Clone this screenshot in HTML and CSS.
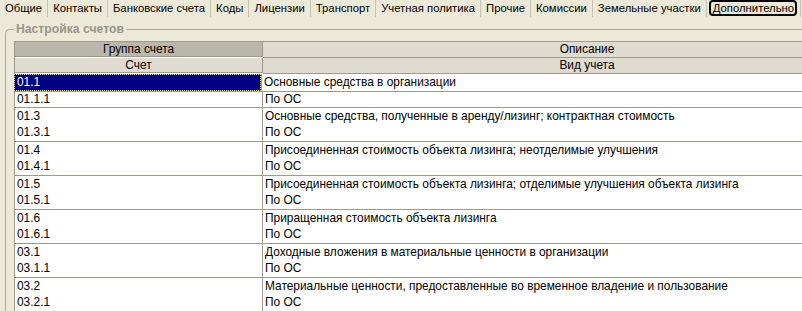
FILE: index.html
```html
<!DOCTYPE html>
<html lang="ru">
<head>
<meta charset="utf-8">
<title>Настройка счетов</title>
<link rel="stylesheet" href="styles.css">
</head>
<body>
<div class="tabs">
  <div class="tab">Общие</div>
  <div class="tab">Контакты</div>
  <div class="tab">Банковские счета</div>
  <div class="tab">Коды</div>
  <div class="tab">Лицензии</div>
  <div class="tab">Транспорт</div>
  <div class="tab">Учетная политика</div>
  <div class="tab">Прочие</div>
  <div class="tab">Комиссии</div>
  <div class="tab">Земельные участки</div>
  <div class="tab active"><span class="focus">Дополнительно</span></div>
  <div class="tab tab-rest"></div>
</div>
<fieldset class="group">
  <legend class="group-title">Настройка счетов</legend>
  <div class="grid">
    <div class="head">
      <div class="hrow">
        <div class="c1 hcell dark">Группа счета</div>
        <div class="c2 hcell">Описание</div>
      </div>
      <div class="hrow">
        <div class="c1 hcell">Счет</div>
        <div class="c2 hcell">Вид учета</div>
      </div>
    </div>
    <div class="rec first">
      <div class="line top"><div class="c1 cell sel"><span>01.1</span></div><div class="c2 cell">Основные средства в организации</div></div>
      <div class="line bottom"><div class="c1 cell">01.1.1</div><div class="c2 cell">По ОС</div></div>
    </div>
    <div class="rec">
      <div class="line top"><div class="c1 cell">01.3</div><div class="c2 cell">Основные средства, полученные в аренду/лизинг; контрактная стоимость</div></div>
      <div class="line bottom"><div class="c1 cell">01.3.1</div><div class="c2 cell">По ОС</div></div>
    </div>
    <div class="rec">
      <div class="line top"><div class="c1 cell">01.4</div><div class="c2 cell">Присоединенная стоимость объекта лизинга; неотделимые улучшения</div></div>
      <div class="line bottom"><div class="c1 cell">01.4.1</div><div class="c2 cell">По ОС</div></div>
    </div>
    <div class="rec">
      <div class="line top"><div class="c1 cell">01.5</div><div class="c2 cell">Присоединенная стоимость объекта лизинга; отделимые улучшения объекта лизинга</div></div>
      <div class="line bottom"><div class="c1 cell">01.5.1</div><div class="c2 cell">По ОС</div></div>
    </div>
    <div class="rec">
      <div class="line top"><div class="c1 cell">01.6</div><div class="c2 cell">Приращенная стоимость объекта лизинга</div></div>
      <div class="line bottom"><div class="c1 cell">01.6.1</div><div class="c2 cell">По ОС</div></div>
    </div>
    <div class="rec">
      <div class="line top"><div class="c1 cell">03.1</div><div class="c2 cell">Доходные вложения в материальные ценности в организации</div></div>
      <div class="line bottom"><div class="c1 cell">03.1.1</div><div class="c2 cell">По ОС</div></div>
    </div>
    <div class="rec">
      <div class="line top"><div class="c1 cell">03.2</div><div class="c2 cell">Материальные ценности, предоставленные во временное владение и пользование</div></div>
      <div class="line bottom"><div class="c1 cell">03.2.1</div><div class="c2 cell">По ОС</div></div>
    </div>
  </div>
</fieldset>
</body>
</html>
```
FILE: styles.css
```css
html, body {
  margin: 0;
  padding: 0;
  background: #ece9d8;
  overflow: hidden;
  width: 802px;
  height: 311px;
}
body {
  font-family: "Liberation Sans", Arial, sans-serif;
  font-size: 11.9px;
  color: #000;
}
.tabs {
  display: flex;
  height: 18px;
  white-space: nowrap;
  font-size: 11.3px;
}
.tab {
  box-sizing: border-box;
  height: 17px;
  padding: 2px 5px 0 5px;
  border-right: 1px solid #c7c3b4;
  line-height: 13px;
}
.tab.active {
  padding: 0 3px 0 2px;
}
.focus {
  display: block;
  height: 16px;
  box-sizing: border-box;
  border: 2px solid #000;
  border-radius: 4px;
  padding: 0 1px 0 2px;
  line-height: 12px;
}
.tab-rest {
  flex: 1;
  border-right: none;
}
.group {
  margin: 5px 0 0 5px;
  padding: 5px 0 0 8px;
  border: none;
  border-top: 1px solid #aca899;
  border-left: 1px solid #aca899;
  border-top-left-radius: 5px;
  min-width: 0;
  width: 940px;
  box-sizing: border-box;
}
.group-title {
  padding: 0 2px;
  font-weight: bold;
  font-size: 12.2px;
  color: #98958a;
  line-height: 13px;
}
.grid {
  width: 896px;
  border-top: 1px solid #9d998b;
  border-left: 1px solid #9d998b;
  background: #fff;
}
.hrow, .line {
  display: flex;
}
.c1 {
  box-sizing: border-box;
  width: 248px;
  flex: none;
  border-right: 1px solid #9d998b;
}
.c2 {
  flex: 1;
}
.hcell {
  height: 15px;
  line-height: 14px;
  text-align: center;
  background: #dfdbd1;
  border-bottom: 1px solid #9d998b;
}
.hcell.dark {
  background: #bcb7ac;
}
.rec {
  border-bottom: 1px solid #9d998b;
}
.cell {
  padding-left: 2px;
  white-space: nowrap;
  overflow: hidden;
}
.line.top .cell {
  height: 17px;
  line-height: 16px;
}
.line.bottom .cell {
  height: 16px;
  line-height: 15px;
}
.rec.first .line.top {
  border-bottom: 1px solid #9d998b;
}
.rec.first .line.bottom .cell {
  height: 15px;
  line-height: 15px;
}
.cell.sel {
  padding: 0;
  margin-left: -1px;
  width: 248px;
  background: #000080;
  color: #fff;
}
.cell.sel span {
  display: block;
  height: 100%;
  box-sizing: border-box;
  border: 1px dotted #ffff40;
  padding-left: 2px;
  line-height: 15px;
}
```
